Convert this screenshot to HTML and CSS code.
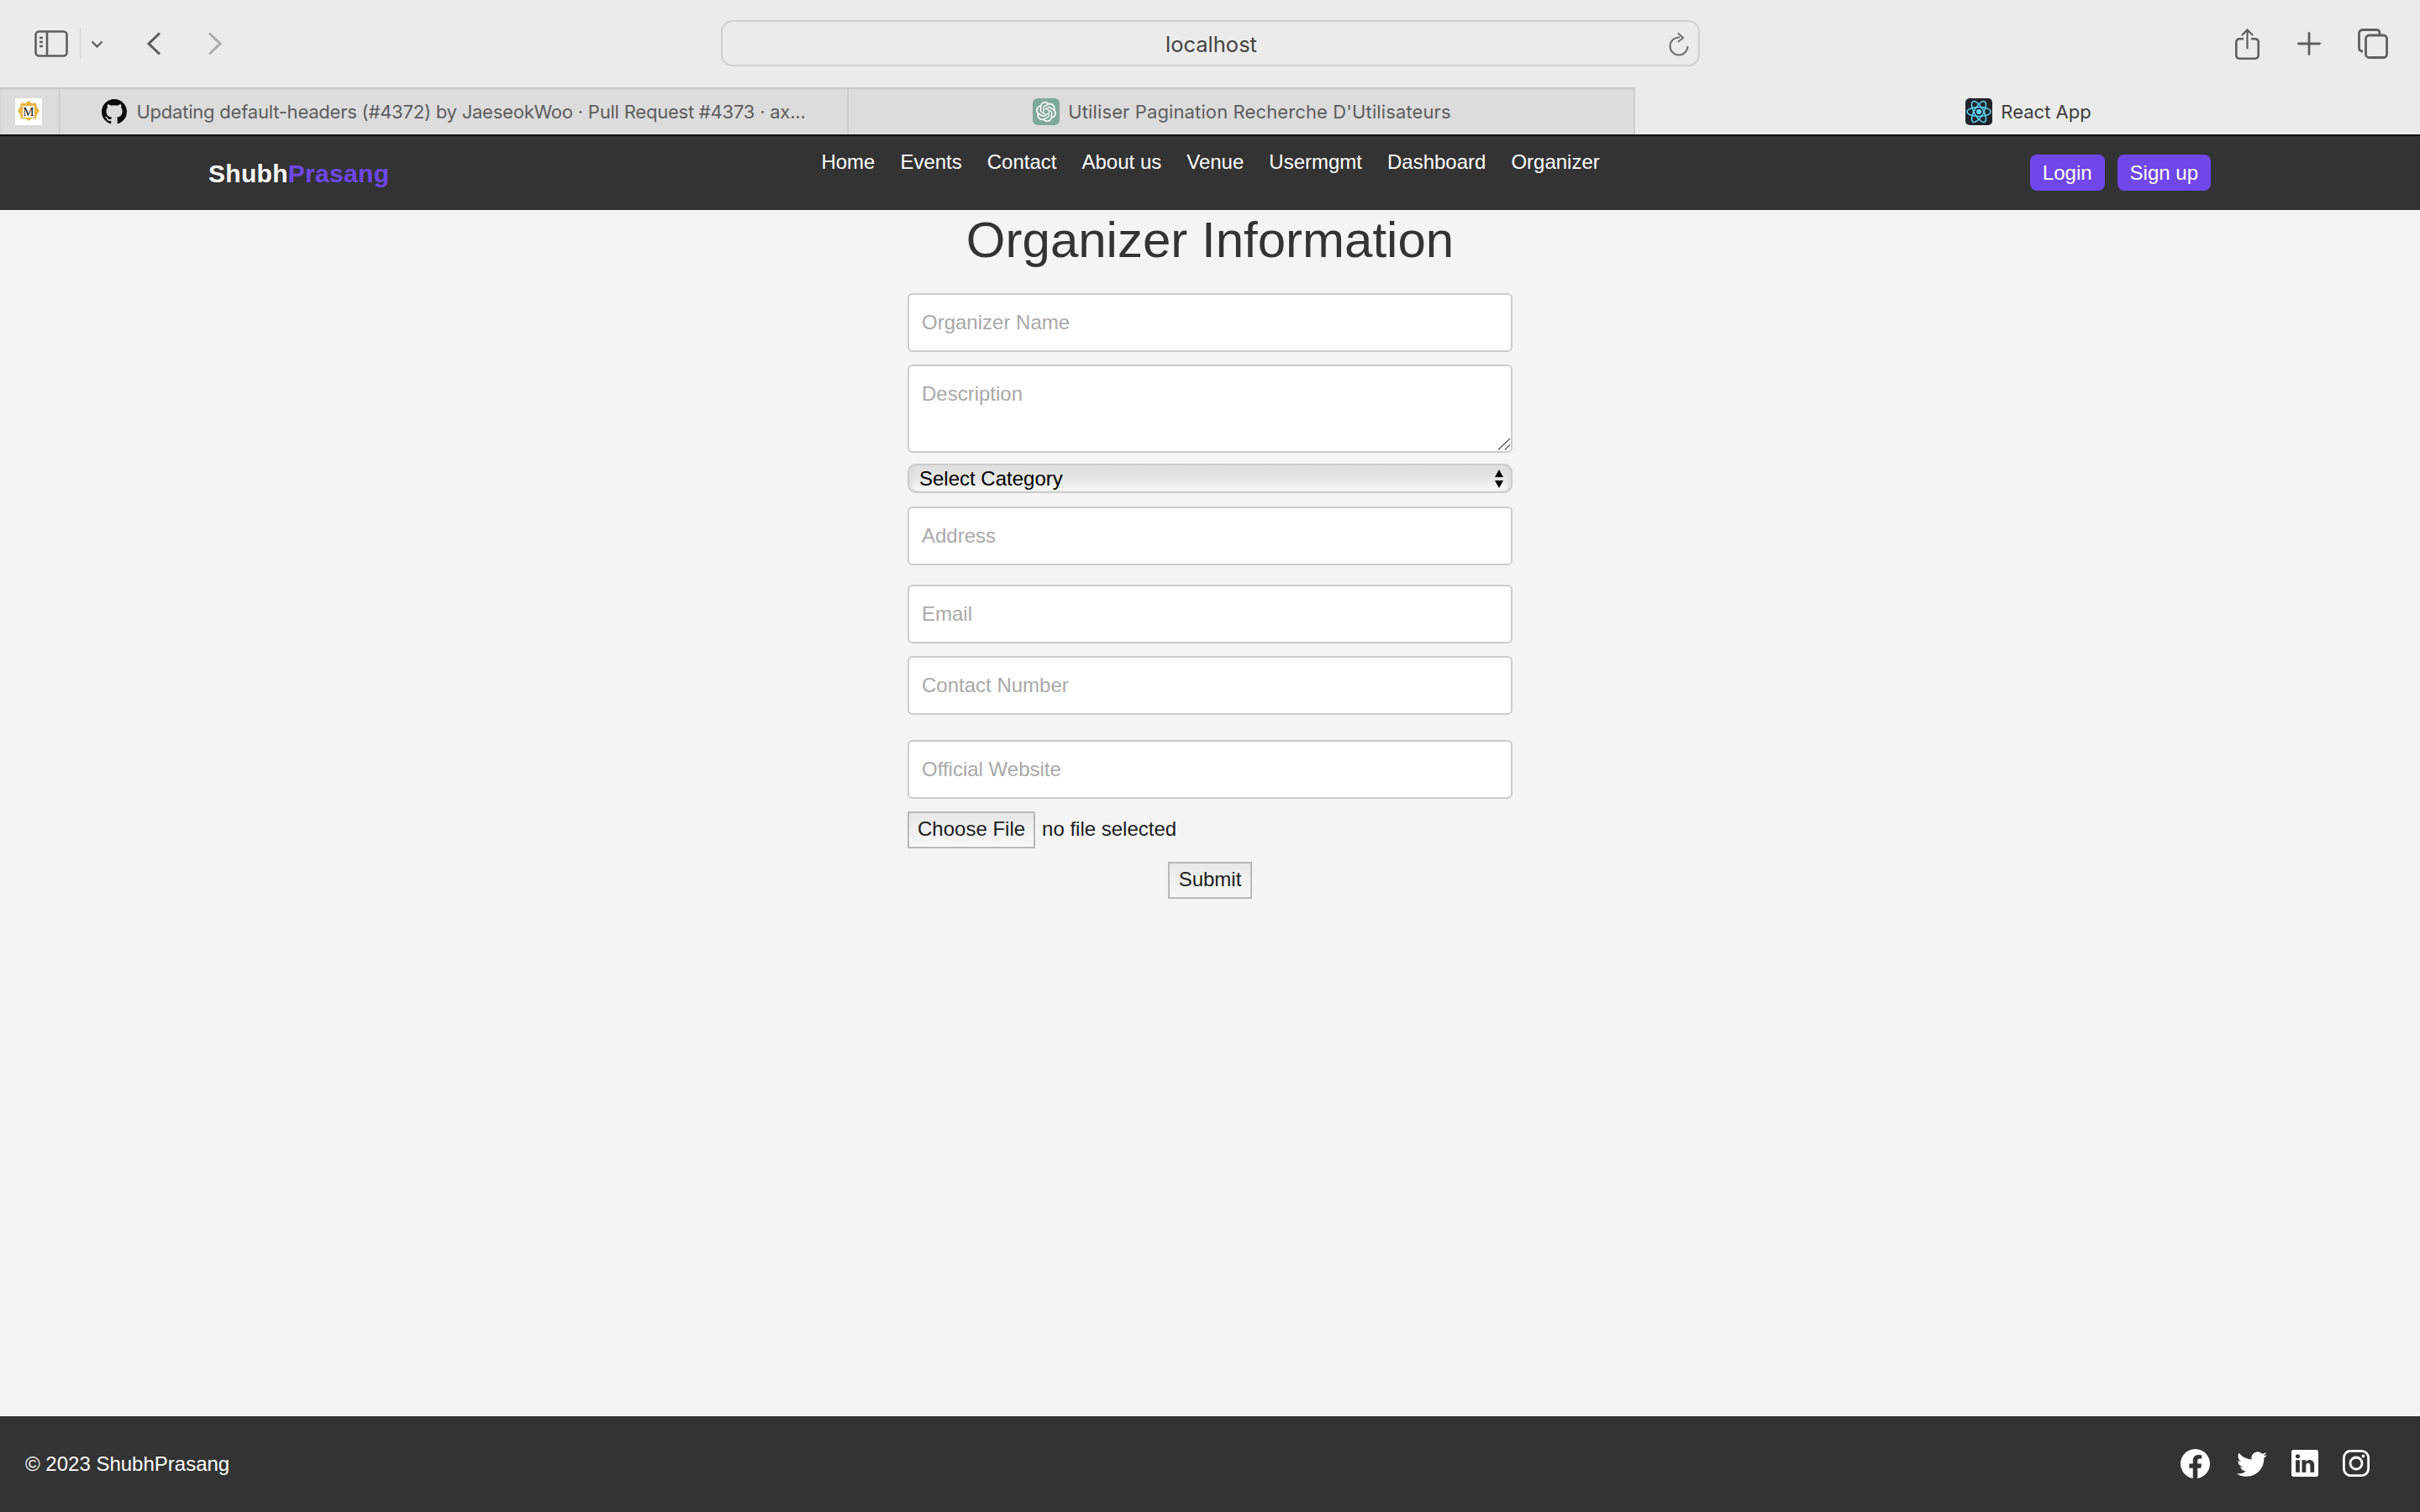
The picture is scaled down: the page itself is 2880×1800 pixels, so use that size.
FILE: index.html
```html
<!DOCTYPE html>
<html lang="en">
<head>
    <meta charset="UTF-8">
    <title>React App</title>
    <link rel="stylesheet" href="styles.css">
</head>
<body>
    <div class="toolbar">
        <div class="toolbar-left">
            <svg class="icon-sidebar" width="40" height="32" viewBox="0 0 40 32" fill="none" stroke="#5f5f5f" stroke-width="2.6">
                <rect x="1.5" y="1.5" width="37" height="29" rx="4"/>
                <path d="M15 2v28"/>
                <path d="M6 9h4M6 14h4M6 19h4" stroke-width="2.4"/>
            </svg>
            <span class="toolbar-divider"></span>
            <svg class="icon-chevron" width="15" height="9" viewBox="0 0 15 9" fill="none" stroke="#5f5f5f" stroke-width="2.4"><path d="M1.5 1.5l6 6 6-6"/></svg>
            <svg class="icon-back" width="18" height="28" viewBox="0 0 18 28" fill="none" stroke="#5a5a5a" stroke-width="3"><path d="M16 1.5L3 14l13 12.5"/></svg>
            <svg class="icon-forward" width="18" height="28" viewBox="0 0 18 28" fill="none" stroke="#ababab" stroke-width="3"><path d="M2 1.5L15 14 2 26.5"/></svg>
        </div>
        <div class="urlbar">
            <span class="url-text">localhost</span>
            <svg class="icon-reload" width="24" height="30" viewBox="0 0 24 30" fill="none" stroke="#6e6e6e" stroke-width="2"><path d="M13 6.500A10.500 10.500 0 1 0 22.500 17"/><path d="M11 1.500l6 5.500-6 5"/></svg>
        </div>
        <div class="toolbar-right">
            <svg width="29" height="37" viewBox="0 0 29 37" fill="none" stroke="#5f5f5f" stroke-width="2.6" stroke-linecap="round"><path d="M9 12.300H5a3.700 3.700 0 0 0-3.700 3.700v16a3.700 3.700 0 0 0 3.700 3.700h19a3.700 3.700 0 0 0 3.700-3.700V16a3.700 3.700 0 0 0-3.700-3.700h-4"/><path d="M14.500 23.500V1.500M8.500 7.500l6-6 6 6" stroke-width="2.200"/></svg>
            <svg width="28" height="28" viewBox="0 0 28 28" fill="none" stroke="#5f5f5f" stroke-width="2.800" stroke-linecap="round"><path d="M14 1.500v25M1.500 14h25"/></svg>
            <svg class="icon-tabs" width="36" height="36" viewBox="0 0 36 36" fill="none" stroke="#5f5f5f" stroke-width="2.800"><path d="M6 27H5a3.500 3.500 0 0 1-3.500-3.500v-18A4 4 0 0 1 5.500 1.500h17A3.500 3.500 0 0 1 26 5v2"/><rect x="9.500" y="8" width="25" height="26.500" rx="4"/></svg>
        </div>
    </div>

    <div class="tabbar">
        <div class="tab tab-pinned">
            <svg class="favicon" width="32" height="32" viewBox="0 0 32 32">
                <rect width="32" height="32" fill="#fff"/>
                <path d="M16 3l4 3 5-.5 1 5 3 4.500-3 4.500-1 5-5-.5-4 3-4-3-5 .5-1-5-3-4.500 3-4.500 1-5 5 .5z" fill="#e9b544"/>
                <rect x="9" y="9" width="14" height="14" fill="#fdf8ec"/>
                <text class="favicon-letter" x="16" y="21" text-anchor="middle">M</text>
            </svg>
        </div>
        <div class="tab tab-github">
            <svg class="favicon" width="30" height="30" viewBox="0 0 16 16" fill="#0b0b0b"><path d="M8 0C3.58 0 0 3.58 0 8c0 3.54 2.29 6.53 5.47 7.59.4.07.55-.17.55-.38 0-.19-.01-.82-.01-1.49-2.01.37-2.53-.49-2.69-.94-.09-.23-.48-.94-.82-1.13-.28-.15-.68-.52-.01-.53.63-.01 1.08.58 1.23.82.72 1.21 1.87.87 2.33.66.07-.52.28-.87.51-1.07-1.78-.2-3.64-.89-3.64-3.95 0-.87.31-1.59.82-2.15-.08-.2-.36-1.02.08-2.12 0 0 .67-.21 2.2.82.64-.18 1.32-.27 2-.27.68 0 1.36.09 2 .27 1.53-1.04 2.2-.82 2.2-.82.44 1.1.16 1.92.08 2.12.51.56.82 1.27.82 2.15 0 3.07-1.87 3.75-3.65 3.95.29.25.54.73.54 1.48 0 1.07-.01 1.93-.01 2.2 0 .21.15.46.55.38A8.013 8.013 0 0016 8c0-4.42-3.58-8-8-8z"/></svg>
            <span>Updating default-headers (#4372) by JaeseokWoo · Pull Request #4373 · ax...</span>
        </div>
        <div class="tab tab-chat">
            <svg class="favicon" width="32" height="32" viewBox="0 0 32 32">
                <rect width="32" height="32" rx="6" fill="#7fa99b"/>
                <path transform="translate(4 4)" fill="#fff" d="M22.2819 9.8211a5.9847 5.9847 0 0 0-.5157-4.9108 6.0462 6.0462 0 0 0-6.5098-2.9A6.0651 6.0651 0 0 0 4.9807 4.1818a5.9847 5.9847 0 0 0-3.9977 2.9 6.0462 6.0462 0 0 0 .7427 7.0966 5.98 5.98 0 0 0 .511 4.9107 6.051 6.051 0 0 0 6.5146 2.9001A5.9847 5.9847 0 0 0 13.2599 24a6.0557 6.0557 0 0 0 5.7718-4.2058 5.9894 5.9894 0 0 0 3.9977-2.9001 6.0557 6.0557 0 0 0-.7475-7.0729zm-9.022 12.6081a4.4755 4.4755 0 0 1-2.8764-1.0408l.1419-.0804 4.7783-2.7582a.7948.7948 0 0 0 .3927-.6813v-6.7369l2.02 1.1686a.071.071 0 0 1 .038.052v5.5826a4.504 4.504 0 0 1-4.4945 4.4944zm-9.6607-4.1254a4.4708 4.4708 0 0 1-.5346-3.0137l.142.0852 4.783 2.7582a.7712.7712 0 0 0 .7806 0l5.8428-3.3685v2.3324a.0804.0804 0 0 1-.0332.0615L9.74 19.9502a4.4992 4.4992 0 0 1-6.1408-1.6464zM2.3408 7.8956a4.485 4.485 0 0 1 2.3655-1.9728V11.6a.7664.7664 0 0 0 .3879.6765l5.8144 3.3543-2.0201 1.1685a.0757.0757 0 0 1-.071 0l-4.8303-2.7865A4.504 4.504 0 0 1 2.3408 7.872zm16.5963 3.8558L13.1038 8.364 15.1192 7.2a.0757.0757 0 0 1 .071 0l4.8303 2.7913a4.4944 4.4944 0 0 1-.6765 8.1042v-5.6772a.79.79 0 0 0-.407-.667zm2.0107-3.0231l-.142-.0852-4.7735-2.7818a.7759.7759 0 0 0-.7854 0L9.409 9.2297V6.8974a.0662.0662 0 0 1 .0284-.0615l4.8303-2.7866a4.4992 4.4992 0 0 1 6.6802 4.66zM8.3065 12.863l-2.02-1.1638a.0804.0804 0 0 1-.038-.0567V6.0742a4.4992 4.4992 0 0 1 7.3757-3.4537l-.142.0805L8.704 5.459a.7948.7948 0 0 0-.3927.6813zm1.0976-2.3654l2.602-1.4998 2.6069 1.4998v2.9994l-2.5974 1.4997-2.6067-1.4997Z"/>
            </svg>
            <span>Utiliser Pagination Recherche D'Utilisateurs</span>
        </div>
        <div class="tab tab-active">
            <svg class="favicon" width="32" height="32" viewBox="0 0 32 32">
                <rect width="32" height="32" rx="5" fill="#20232a"/>
                <g fill="none" stroke="#61dafb" stroke-width="1.500">
                    <ellipse cx="16" cy="16" rx="14" ry="5.500"/>
                    <ellipse cx="16" cy="16" rx="14" ry="5.500" transform="rotate(60 16 16)"/>
                    <ellipse cx="16" cy="16" rx="14" ry="5.500" transform="rotate(120 16 16)"/>
                </g>
                <circle cx="16" cy="16" r="3" fill="#61dafb"/>
            </svg>
            <span>React App</span>
        </div>
    </div>

    <nav class="navbar">
        <div class="brand">Shubh<span class="brand-accent">Prasang</span></div>
        <ul class="nav-links">
            <li>Home</li>
            <li>Events</li>
            <li>Contact</li>
            <li>About us</li>
            <li>Venue</li>
            <li>Usermgmt</li>
            <li>Dashboard</li>
            <li>Organizer</li>
        </ul>
        <div class="nav-buttons">
            <button class="nav-btn" type="button">Login</button>
            <button class="nav-btn" type="button">Sign up</button>
        </div>
    </nav>

    <main class="content">
        <h1 class="title">Organizer Information</h1>
        <form class="organizer-form">
            <input class="field gap-15" type="text" placeholder="Organizer Name">
            <div class="area-wrap gap-13">
                <textarea class="field field-area" placeholder="Description"></textarea>
                <svg class="area-grip" width="16" height="15" viewBox="0 0 16 15" fill="none" stroke="#666" stroke-width="1.500"><path d="M1 14.500L15 1M9 14.500l6-6"/></svg>
            </div>
            <div class="select-wrap gap-16">
                <select class="select-field">
                    <option>Select Category</option>
                </select>
                <svg class="select-arrows" width="12" height="22" viewBox="0 0 12 22" fill="#000"><path d="M6 0l5 9H1zM6 22l-5-9h10z"/></svg>
            </div>
            <input class="field gap-23" type="text" placeholder="Address">
            <input class="field gap-15" type="email" placeholder="Email">
            <input class="field gap-30" type="text" placeholder="Contact Number">
            <input class="field gap-15" type="text" placeholder="Official Website">
            <div class="file-row gap-16">
                <button class="plain-btn file-btn" type="button">Choose File</button>
                <span class="file-name">no file selected</span>
            </div>
            <button class="plain-btn submit-btn" type="submit">Submit</button>
        </form>
    </main>

    <footer class="footer">
        <span class="copyright">© 2023 ShubhPrasang</span>
        <div class="social">
            <svg class="icon-facebook" width="35" height="35" viewBox="0 0 16 16" fill="#fff"><path d="M16 8.049c0-4.446-3.582-8.05-8-8.05C3.58 0-.002 3.603-.002 8.05c0 4.017 2.926 7.347 6.75 7.951v-5.625h-2.03V8.05H6.75V6.275c0-2.017 1.195-3.131 3.022-3.131.876 0 1.791.157 1.791.157v1.98h-1.009c-.993 0-1.303.621-1.303 1.258v1.51h2.218l-.354 2.326H9.25V16c3.824-.604 6.75-3.934 6.75-7.951z"/></svg>
            <svg width="36" height="36" viewBox="0 0 16 16" fill="#fff"><path d="M5.026 15c6.038 0 9.341-5.003 9.341-9.334 0-.14 0-.282-.006-.422A6.685 6.685 0 0 0 16 3.542a6.658 6.658 0 0 1-1.889.518 3.301 3.301 0 0 0 1.447-1.817 6.533 6.533 0 0 1-2.087.793A3.286 3.286 0 0 0 7.875 6.03a9.325 9.325 0 0 1-6.767-3.429 3.289 3.289 0 0 0 1.018 4.382A3.323 3.323 0 0 1 .64 6.575v.045a3.288 3.288 0 0 0 2.632 3.218 3.203 3.203 0 0 1-.865.115 3.23 3.23 0 0 1-.614-.057 3.283 3.283 0 0 0 3.067 2.277A6.588 6.588 0 0 1 .78 13.58a6.32 6.32 0 0 1-.78-.045A9.344 9.344 0 0 0 5.026 15z"/></svg>
            <svg width="32" height="32" viewBox="0 0 16 16" fill="#fff"><path d="M0 1.146C0 .513.526 0 1.175 0h13.65C15.474 0 16 .513 16 1.146v13.708c0 .633-.526 1.146-1.175 1.146H1.175C.526 16 0 15.487 0 14.854V1.146zm4.943 12.248V6.169H2.542v7.225h2.401zm-1.2-8.212c.837 0 1.358-.554 1.358-1.248-.015-.709-.52-1.248-1.342-1.248-.822 0-1.359.54-1.359 1.248 0 .694.521 1.248 1.327 1.248h.016zm4.908 8.212V9.359c0-.216.016-.432.08-.586.173-.431.568-.878 1.232-.878.869 0 1.216.662 1.216 1.634v3.865h2.401V9.25c0-2.22-1.184-3.252-2.764-3.252-1.274 0-1.845.7-2.165 1.193v.025h-.016a5.54 5.54 0 0 1 .016-.025V6.169h-2.4c.03.678 0 7.225 0 7.225h2.4z"/></svg>
            <svg width="32" height="32" viewBox="0 0 32 32" fill="none" stroke="#fff" stroke-width="2.800"><rect x="1.400" y="1.400" width="29.200" height="29.200" rx="8"/><circle cx="16" cy="16" r="7"/><circle cx="24.500" cy="7.500" r="1.900" fill="#fff" stroke="none"/></svg>
        </div>
    </footer>
</body>
</html>
```

FILE: styles.css
```css
* {
    box-sizing: border-box;
}
body {
    margin: 0;
    height: 1800px;
    display: flex;
    flex-direction: column;
    font-family: "Liberation Sans", Arial, sans-serif;
    font-size: 24px;
    background-color: #f4f4f4;
    color: #333;
}

/* browser chrome */
.toolbar {
    height: 104px;
    flex-shrink: 0;
    display: flex;
    align-items: center;
    background-color: #ebebeb;
}
.toolbar-left {
    width: 858px;
    display: flex;
    align-items: center;
    padding-left: 41px;
}
.toolbar-divider {
    width: 1px;
    height: 36px;
    margin-left: 14px;
    background-color: #d2d2d2;
}
.icon-chevron {
    margin-left: 12px;
}
.icon-back {
    margin-left: 51px;
}
.icon-forward {
    margin-left: 55px;
}
.urlbar {
    width: 1165px;
    height: 55px;
    margin-top: -1px;
    display: flex;
    align-items: center;
    justify-content: center;
    position: relative;
    border: 2px solid #d0d0d0;
    border-radius: 14px;
}
.url-text {
    font-family: Inter, sans-serif;
    font-size: 25.5px;
    color: #444;
    margin: 1px 0 0 2px;
}
.icon-reload {
    position: absolute;
    right: 11px;
    top: 12px;
}
.toolbar-right {
    flex: 1;
    display: flex;
    align-items: center;
    gap: 45px;
    padding-left: 637px;
}
.icon-tabs {
    margin-left: -1px;
}
.tabbar {
    height: 56px;
    flex-shrink: 0;
    display: flex;
    font-family: Inter, sans-serif;
    font-size: 22px;
    color: #5d5d5d;
    background-color: #dcdcdc;
    box-shadow: inset 0 2px 2px #c4c4c4;
}
.tab {
    display: flex;
    align-items: center;
    justify-content: center;
    gap: 10px;
    padding-top: 1px;
    border-right: 2px solid #cdcdcd;
}
.favicon-letter {
    font-family: "Liberation Serif", serif;
    font-size: 15px;
    fill: #222;
}
.tab-pinned {
    width: 72px;
    padding-right: 3px;
}
.tab-github {
    width: 938px;
    gap: 11px;
    letter-spacing: -0.22px;
}
.tab-chat {
    width: 936px;
    padding-left: 2px;
    letter-spacing: 0.12px;
}
.tab-active {
    flex: 1;
    padding-left: 2px;
    border-right: none;
    color: #3c3c3c;
    background-color: #ebebeb;
}

/* site header */
.navbar {
    height: 90px;
    flex-shrink: 0;
    display: flex;
    justify-content: space-between;
    padding: 0 249px 0 248px;
    border-top: 2px solid #111;
    background-color: #333;
    color: #fff;
}
.brand {
    font-size: 30px;
    font-weight: bold;
    letter-spacing: 0.3px;
    margin-top: 28px;
}
.brand-accent {
    color: #6f47eb;
}
.nav-links {
    list-style: none;
    display: flex;
    gap: 30px;
    margin: 17px 0 0 2px;
    padding: 0;
}
.nav-buttons {
    display: flex;
    gap: 15px;
    margin-top: 22px;
}
.nav-btn {
    height: 43px;
    padding: 0 15px;
    border: none;
    border-radius: 8px;
    font-family: inherit;
    font-size: 24px;
    color: #fff;
    background-color: #6f47eb;
}

/* form */
.content {
    flex: 1;
    display: flex;
    flex-direction: column;
    align-items: center;
}
.title {
    margin: 0;
    height: 99px;
    padding-top: 1px;
    font-size: 60px;
    font-weight: normal;
    line-height: 70px;
}
.organizer-form {
    width: 720px;
    display: flex;
    flex-direction: column;
    align-items: flex-start;
}
.field {
    width: 100%;
    height: 70px;
    padding: 0 15px;
    border: 2px solid #ccc;
    border-radius: 6px;
    font-family: inherit;
    font-size: 24px;
    color: #333;
    background-color: #fff;
}
.field::placeholder {
    color: #a9a9a9;
}
.area-wrap {
    width: 100%;
    position: relative;
}
.field-area {
    display: block;
    height: 105px;
    padding-top: 19px;
    resize: none;
}
.area-grip {
    position: absolute;
    right: 2px;
    bottom: 3px;
}
.gap-13 {
    margin-bottom: 13px;
}
.gap-15 {
    margin-bottom: 15px;
}
.gap-16 {
    margin-bottom: 16px;
}
.gap-23 {
    margin-bottom: 23px;
}
.gap-30 {
    margin-bottom: 30px;
}
.select-wrap {
    width: 100%;
    position: relative;
}
.select-field {
    display: block;
    width: 100%;
    height: 35px;
    padding: 0 12px;
    appearance: none;
    border: 2px solid #ccc;
    border-radius: 10px;
    font-family: inherit;
    font-size: 24px;
    color: #000;
    background: linear-gradient(#e0e0e0, #e6e6e6 55%, #fbfbfb);
    box-shadow: inset 3px 0 3px #ddd, inset -3px 0 3px #ddd;
}
.select-arrows {
    position: absolute;
    right: 10px;
    top: 7px;
}
.file-row {
    display: flex;
    align-items: center;
    gap: 8px;
}
.plain-btn {
    height: 44px;
    padding: 0 11px;
    border: 2px solid #b9b9b9;
    border-radius: 0;
    font-family: inherit;
    font-size: 24px;
    color: #1c1c1c;
    background: linear-gradient(#e8e8e8, #f8f8f8);
}
.file-btn {
    padding: 0 10px 2px;
}
.file-name {
    color: #1c1c1c;
    margin-bottom: 2px;
}
.submit-btn {
    align-self: center;
    padding-bottom: 2px;
}

/* footer */
.footer {
    height: 114px;
    flex-shrink: 0;
    display: flex;
    align-items: center;
    justify-content: space-between;
    padding: 0 60px 0 30px;
    background-color: #333;
    color: #fff;
}
.social {
    display: flex;
    align-items: center;
    gap: 29px;
    margin-bottom: 2px;
}
.icon-facebook {
    margin-right: 3px;
}
```
